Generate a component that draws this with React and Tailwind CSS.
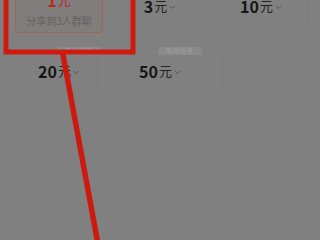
import React from 'react';

const font = { fontFamily: '"Noto Sans CJK SC", "Noto Sans", sans-serif' };

const Chevron = () => (
  <svg width="7" height="5" viewBox="0 0 7 5" className="ml-[2px] mt-[2px]">
    <path d="M1 1 L3.5 3.5 L6 1" fill="none" stroke="#555" strokeWidth="1" />
  </svg>
);

const Amount = ({ value, red }) => (
  <div className="flex items-center">
    <span className={`text-[16px] font-bold leading-[20px] ${red ? 'text-[#b8281c]' : 'text-[#161616]'}`}>{value}</span>
    <span className={`text-[13px] leading-[20px] ml-[1px] ${red ? 'text-[#b8281c]' : 'text-[#222]'}`}>元</span>
    {!red && <Chevron />}
  </div>
);

const Badge = ({ label }) => (
  <span className="absolute right-[1px] top-[-5px] h-[8px] w-[44px] rounded-[2px] bg-[#8a8a8a] flex items-center justify-center text-[6px] leading-none text-[#9e9e9e] tracking-[1px]">
    {label}
  </span>
);

export default function App() {
  return (
    <div className="relative w-[320px] h-[240px] overflow-hidden bg-[#808080]" style={font}>
      {/* amount grid */}
      <div className="grid grid-cols-3 gap-x-[13px] gap-y-[18px] px-[15px] mt-[-14px] items-start">
        <div className="h-[47px] rounded-[4px] border border-[#9c6656] bg-[#817d7c] flex flex-col items-center pt-[3px]">
          <Amount value="1" red />
          <span className="text-[10px] leading-[14px] mt-[4px] text-[#626262]">分享到3人群聊</span>
        </div>
        <div className="h-[44px] rounded-[4px] border border-[#838383] flex items-center justify-center pb-[4px]">
          <Amount value="3" />
        </div>
        <div className="h-[44px] rounded-[4px] border border-[#848484] flex items-center justify-center pb-[4px]">
          <Amount value="10" />
        </div>

        <div className="relative h-[44px] rounded-[4px] border border-[#828282] flex items-center justify-center pb-[4px]">
          <Badge label="限时特惠" />
          <Amount value="20" />
        </div>
        <div className="relative h-[44px] rounded-[4px] border border-[#828282] flex items-center justify-center pb-[4px]">
          <Badge label="限时特惠" />
          <Amount value="50" />
        </div>
        <div className="h-[44px] rounded-[4px] border border-[#828282]" />
      </div>

      {/* red annotation */}
      <svg className="absolute inset-0" width="320" height="240" viewBox="0 0 320 240">
        <rect x="6" y="-10" width="127" height="62" fill="none" stroke="#d01a10" strokeWidth="5" />
        <line x1="62.5" y1="52" x2="98" y2="244" stroke="#cc1a10" strokeWidth="5.5" />
      </svg>
    </div>
  );
}
